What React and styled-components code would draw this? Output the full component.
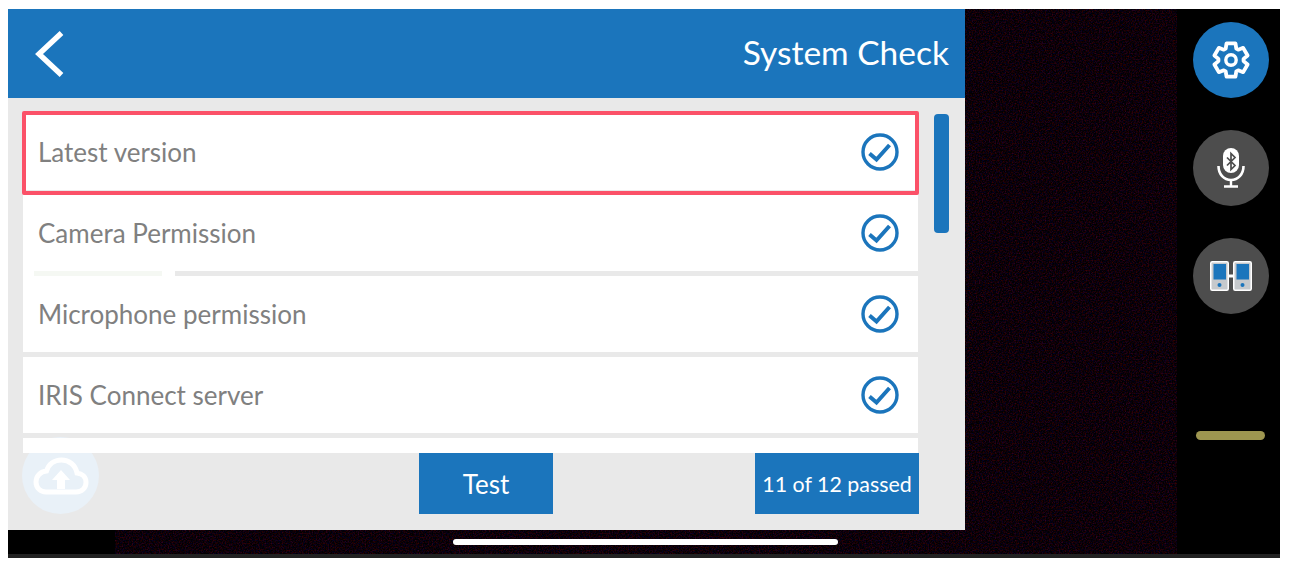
import React from 'react'
import styled, { createGlobalStyle } from 'styled-components'

const noise = `url("data:image/svg+xml,%3Csvg xmlns='http://www.w3.org/2000/svg' width='300' height='300'%3E%3Cfilter id='n' color-interpolation-filters='sRGB'%3E%3CfeTurbulence type='fractalNoise' baseFrequency='0.7' numOctaves='2' stitchTiles='stitch'/%3E%3CfeColorMatrix values='0.55 0 0 0 -0.23 0 0 0 0 0 0 0.4 0 0 -0.17 0 0 0 0 1'/%3E%3C/filter%3E%3Crect width='300' height='300' filter='url(%23n)'/%3E%3C/svg%3E")`

const GlobalStyle = createGlobalStyle`
  html, body {
    margin: 0;
    background: #fff;
    font-family: Lato, "Open Sans", sans-serif;
  }
`

const Page = styled.div`
  width: 1290px;
  height: 569px;
  padding: 9px 10px 11px 8px;
  box-sizing: border-box;
  overflow: hidden;
`

const Screen = styled.div`
  position: relative;
  height: 549px;
  display: flex;
  flex-direction: column;
`

const Stage = styled.div`
  flex: 1;
  display: flex;
  min-height: 0;
`

const BottomStrip = styled.div`
  height: 4px;
  background: #222;
`

const Camera = styled.div`
  flex: 1;
  display: flex;
  flex-direction: column;
  background-color: #080406;
  background-image: ${noise};
`

const Patch = styled.div`
  flex: 1;
  width: 107px;
  background: #000;
`

const Panel = styled.div`
  position: relative;
  width: 957px;
  height: 521px;
  display: flex;
  flex-direction: column;
  background: #e9e9e9;
`

const Header = styled.header`
  height: 89px;
  flex: none;
  display: flex;
  align-items: center;
  justify-content: space-between;
  padding: 0 16px 0 26px;
  background: #1b75bc;
  color: #fff;
`

const Title = styled.h1`
  margin: -4px 0 0;
  font-size: 33.5px;
  font-weight: 400;
`

const Body = styled.div`
  height: 355px;
  flex: none;
  display: flex;
  padding: 16px 16px 0 15px;
  box-sizing: border-box;
  gap: 16px;
`

const List = styled.div`
  position: relative;
  z-index: 1;
  flex: none;
  width: 895px;
  margin: -3px -1px 0;
  padding: 3px 1px 0;
  display: flex;
  flex-direction: column;
  gap: 5px;
  overflow: hidden;
`

const Row = styled.div`
  position: relative;
  flex: none;
  height: 76px;
  display: flex;
  align-items: center;
  justify-content: space-between;
  padding: 0 19px 0 15px;
  background: #fff;
  color: #808080;
  font-size: 26px;

  ${(p) => p.$selected && `
    &::after {
      content: '';
      position: absolute;
      inset: -3px -1px -5px -1px;
      border: 4px solid #fb5168;
      border-radius: 2px;
    }
  `}

  ${(p) => p.$tab && `
    &::before {
      content: '';
      position: absolute;
      left: 0;
      bottom: -5px;
      width: 152px;
      height: 5px;
      background: linear-gradient(90deg, #fff 11px, #f5f8f3 11px, #f5f8f3 139px, #fff 139px);
    }
  `}
`

const Scrollbar = styled.div`
  width: 15px;
  height: 119px;
  border-radius: 4px;
  background: #1b75bc;
`

const Footer = styled.div`
  flex: 1;
  display: flex;
  justify-content: space-between;
  padding: 0 46px 16px 411px;
`

const ActionBox = styled.div`
  width: ${(p) => p.$width}px;
  display: flex;
  align-items: center;
  justify-content: center;
  background: #1b75bc;
  color: #fff;
  font-size: ${(p) => p.$size}px;
`

const UploadButton = styled.div`
  position: absolute;
  left: 14px;
  bottom: 16px;
  width: 77px;
  height: 77px;
  display: flex;
  align-items: center;
  justify-content: center;
  border-radius: 50%;
  background: #e9f1f8;
`

const Rail = styled.aside`
  width: 103px;
  flex: none;
  display: flex;
  flex-direction: column;
  align-items: center;
  padding: 13px 0 0 5px;
  box-sizing: border-box;
  gap: 32px;
  background: #000;
`

const RailButton = styled.div`
  width: 76px;
  height: 76px;
  display: flex;
  align-items: center;
  justify-content: center;
  border-radius: 50%;
  color: #fff;
  background: ${(p) => (p.$active ? '#1b75bc' : '#4d4d4d')};
`

const Pill = styled.div`
  width: 69px;
  height: 9px;
  margin: 85px 2px 0 0;
  border-radius: 5px;
  background: #9e9650;
`

const HomeIndicator = styled.div`
  position: absolute;
  left: 445px;
  top: 530px;
  width: 385px;
  height: 6px;
  border-radius: 3px;
  background: #fff;
`

const CheckIcon = () => (
  <svg width="38" height="38" viewBox="0 0 38 38" fill="none" stroke="#1b75bc">
    <circle cx="19" cy="19" r="17" strokeWidth="3.4" />
    <path d="M8.5 20.5 L15.5 26.5 L28.5 12" strokeWidth="4" />
  </svg>
)

const BackIcon = () => (
  <svg width="30" height="46" viewBox="0 0 30 46" fill="none" stroke="#fff" strokeWidth="5.4">
    <path d="M27.5 2 L5 23 L27.5 44" />
  </svg>
)

const CloudIcon = () => (
  <svg width="56" height="38" viewBox="0 0 56 38" fill="none">
    <path
      d="M13 35 H43 C49 35 53 31 53 25.5 C53 20 49 16.5 44 16 C42.5 8 36 3 28.5 3 C21 3 15.5 7.5 13.5 14 C7.5 14.5 3 19 3 25 C3 31 7.5 35 13 35 Z"
      stroke="#fff"
      strokeWidth="5"
    />
    <path d="M28 13 L37 23 H32 V32 H24 V23 H19 Z" fill="#fff" />
  </svg>
)

// six-toothed cog outline, worked out from the tooth angles
const gearPath = () => {
  const at = (r, deg) => {
    const a = ((deg - 90) * Math.PI) / 180
    return `${(20 + r * Math.cos(a)).toFixed(2)} ${(20 + r * Math.sin(a)).toFixed(2)}`
  }
  const points = []
  for (let i = 0; i < 6; i++) {
    const a = i * 60
    points.push(at(12.6, a - 25), at(17.2, a - 15), at(17.2, a + 15), at(12.6, a + 25))
  }
  return `M${points.join(' L')} Z`
}

const GearIcon = () => (
  <svg width="40" height="40" viewBox="0 0 40 40" fill="none" stroke="#fff" strokeWidth="3.8" strokeLinejoin="round">
    <path d={gearPath()} />
    <circle cx="20" cy="20" r="5.2" strokeWidth="3.4" />
  </svg>
)

const BtMicIcon = () => (
  <svg width="28" height="40" viewBox="0 0 28 40" fill="none" stroke="#fff">
    <rect x="6" y="0" width="16" height="25" rx="8" fill="#fff" stroke="none" />
    <path d="M10 9.5 L18 17.5 L14 21.5 V5.5 L18 9.5 L10 17.5" stroke="#4d4d4d" strokeWidth="1.7" />
    <path d="M1.5 18 C1.5 26.5 7 32 14 32 C21 32 26.5 26.5 26.5 18" strokeWidth="2.6" />
    <path d="M14 32 V38.5 M7 38.5 H21" strokeWidth="2.4" />
  </svg>
)

const DevicesIcon = () => (
  <svg width="42" height="30" viewBox="0 0 42 30">
    <rect x="0.75" y="0.75" width="17.5" height="28.5" rx="1.5" fill="#c6c9cc" stroke="#fff" strokeWidth="1.5" />
    <rect x="23.75" y="0.75" width="17.5" height="28.5" rx="1.5" fill="#c6c9cc" stroke="#fff" strokeWidth="1.5" />
    <rect x="3.5" y="3" width="12.5" height="15.5" fill="#1b75bc" />
    <rect x="26.5" y="3" width="12.5" height="15.5" fill="#1b75bc" />
    <circle cx="9.5" cy="24" r="2" fill="#1b75bc" />
    <circle cx="32.5" cy="24" r="2" fill="#1b75bc" />
    <rect x="19" y="13.5" width="4" height="3" fill="#fff" />
  </svg>
)

const checks = [
  'Latest version',
  'Camera Permission',
  'Microphone permission',
  'IRIS Connect server',
  '',
]

export default function App() {
  return (
    <Page>
      <GlobalStyle />
      <Screen>
        <Stage>
          <Camera>
            <Panel>
              <Header>
                <BackIcon />
                <Title>System Check</Title>
              </Header>
              <Body>
                <List>
                  {checks.map((name, i) => (
                    <Row key={i} $selected={i === 0} $tab={i === 1}>
                      {name}
                      {name && <CheckIcon />}
                    </Row>
                  ))}
                </List>
                <Scrollbar />
              </Body>
              <Footer>
                <ActionBox $width={134} $size={26}>Test</ActionBox>
                <ActionBox $width={164} $size={21.4}>11 of 12 passed</ActionBox>
              </Footer>
              <UploadButton>
                <CloudIcon />
              </UploadButton>
            </Panel>
            <Patch />
          </Camera>
          <Rail>
            <RailButton $active>
              <GearIcon />
            </RailButton>
            <RailButton>
              <BtMicIcon />
            </RailButton>
            <RailButton>
              <DevicesIcon />
            </RailButton>
            <Pill />
          </Rail>
        </Stage>
        <BottomStrip />
        <HomeIndicator />
      </Screen>
    </Page>
  )
}
